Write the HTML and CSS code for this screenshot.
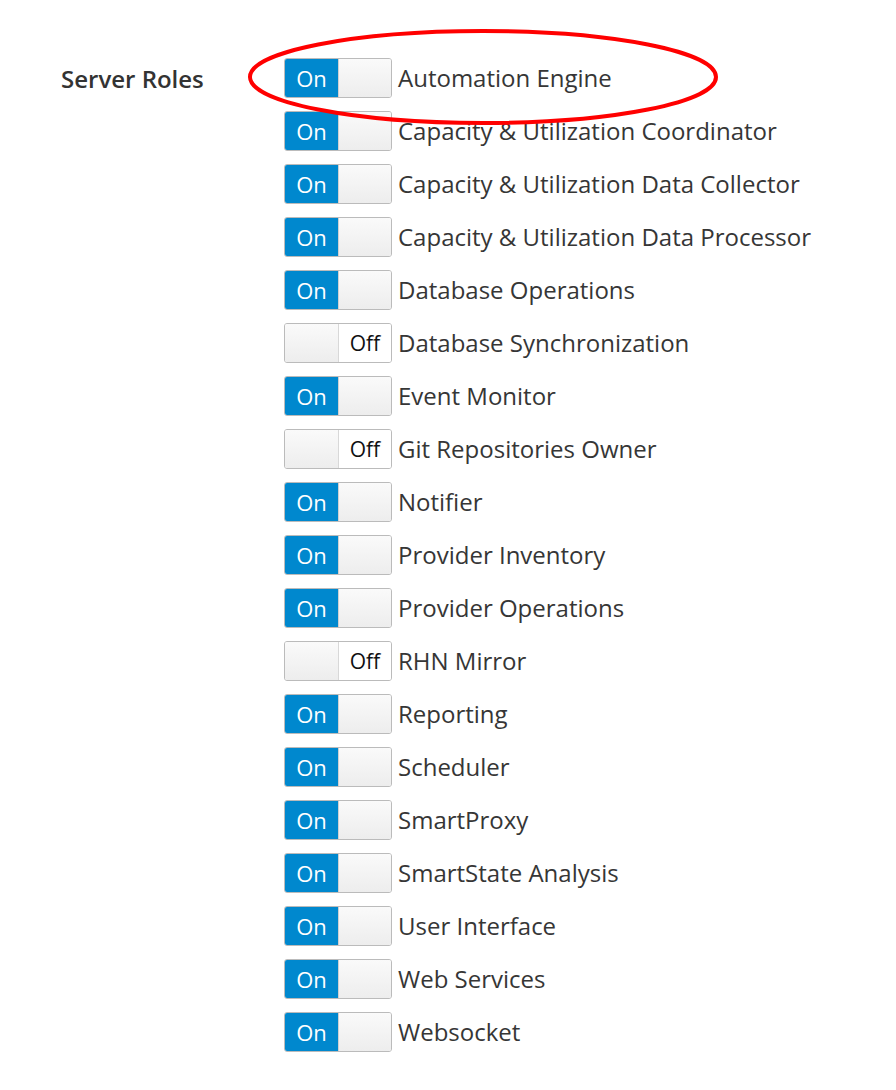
FILE: index.html
```html
<!DOCTYPE html>
<html>
<head>
<meta charset="utf-8">
<link rel="stylesheet" href="styles.css">
</head>
<body>
<div class="form">
  <div class="form-label">Server Roles</div>
  <div class="roles">
    <div class="role"><span class="switch on"><span class="on-part">On</span><span class="handle"></span></span><span class="name">Automation Engine</span></div>
    <div class="role"><span class="switch on"><span class="on-part">On</span><span class="handle"></span></span><span class="name">Capacity &amp; Utilization Coordinator</span></div>
    <div class="role"><span class="switch on"><span class="on-part">On</span><span class="handle"></span></span><span class="name">Capacity &amp; Utilization Data Collector</span></div>
    <div class="role"><span class="switch on"><span class="on-part">On</span><span class="handle"></span></span><span class="name">Capacity &amp; Utilization Data Processor</span></div>
    <div class="role"><span class="switch on"><span class="on-part">On</span><span class="handle"></span></span><span class="name">Database Operations</span></div>
    <div class="role"><span class="switch off"><span class="handle"></span><span class="off-part">Off</span></span><span class="name">Database Synchronization</span></div>
    <div class="role"><span class="switch on"><span class="on-part">On</span><span class="handle"></span></span><span class="name">Event Monitor</span></div>
    <div class="role"><span class="switch off"><span class="handle"></span><span class="off-part">Off</span></span><span class="name">Git Repositories Owner</span></div>
    <div class="role"><span class="switch on"><span class="on-part">On</span><span class="handle"></span></span><span class="name">Notifier</span></div>
    <div class="role"><span class="switch on"><span class="on-part">On</span><span class="handle"></span></span><span class="name">Provider Inventory</span></div>
    <div class="role"><span class="switch on"><span class="on-part">On</span><span class="handle"></span></span><span class="name">Provider Operations</span></div>
    <div class="role"><span class="switch off"><span class="handle"></span><span class="off-part">Off</span></span><span class="name">RHN Mirror</span></div>
    <div class="role"><span class="switch on"><span class="on-part">On</span><span class="handle"></span></span><span class="name">Reporting</span></div>
    <div class="role"><span class="switch on"><span class="on-part">On</span><span class="handle"></span></span><span class="name">Scheduler</span></div>
    <div class="role"><span class="switch on"><span class="on-part">On</span><span class="handle"></span></span><span class="name">SmartProxy</span></div>
    <div class="role"><span class="switch on"><span class="on-part">On</span><span class="handle"></span></span><span class="name">SmartState Analysis</span></div>
    <div class="role"><span class="switch on"><span class="on-part">On</span><span class="handle"></span></span><span class="name">User Interface</span></div>
    <div class="role"><span class="switch on"><span class="on-part">On</span><span class="handle"></span></span><span class="name">Web Services</span></div>
    <div class="role"><span class="switch on"><span class="on-part">On</span><span class="handle"></span></span><span class="name">Websocket</span></div>
  </div>
</div>
<svg class="highlight" width="896" height="1090" viewBox="0 0 896 1090">
  <ellipse cx="483" cy="77" rx="233" ry="46" fill="none" stroke="#ff0000" stroke-width="4"/>
</svg>
</body>
</html>
```
FILE: styles.css
```css
html, body {
  margin: 0;
  padding: 0;
  background: #ffffff;
}
body {
  font-family: "Open Sans", "Liberation Sans", sans-serif;
  color: #363636;
  position: relative;
  width: 896px;
  height: 1090px;
  overflow: hidden;
}
.form {
  display: flex;
  padding-top: 58px;
  padding-left: 61px;
}
.form-label {
  width: 223px;
  font-size: 24px;
  font-weight: 600;
  line-height: 42px;
  color: #333333;
}
.roles {
  display: flex;
  flex-direction: column;
  gap: 13px;
}
.role {
  display: flex;
  align-items: center;
  height: 40px;
}
.switch {
  display: flex;
  flex: none;
  box-sizing: border-box;
  width: 108px;
  height: 40px;
  border: 1px solid #bbbbbb;
  border-radius: 3px;
  overflow: hidden;
  box-shadow: inset 0 1px 1px rgba(0,0,0,0.05);
}
.on-part {
  width: 53px;
  background: #0088ce;
  color: #ffffff;
  font-size: 22px;
  line-height: 38px;
  text-align: center;
}
.off-part {
  flex: 1;
  background: #ffffff;
  color: #111111;
  font-size: 21px;
  line-height: 38px;
  text-align: center;
}
.handle {
  flex: 1;
  background: linear-gradient(to bottom, #fafafa, #ededed);
}
.switch.off .handle {
  flex: none;
  width: 53px;
  border-right: 1px solid #d8d8d8;
}
.switch.on .handle {
  border-left: 1px solid #d0d0d0;
}
.name {
  margin-left: 6px;
  font-size: 24px;
  line-height: 40px;
  white-space: nowrap;
}
.highlight {
  position: absolute;
  left: 0;
  top: 0;
  pointer-events: none;
}
```
